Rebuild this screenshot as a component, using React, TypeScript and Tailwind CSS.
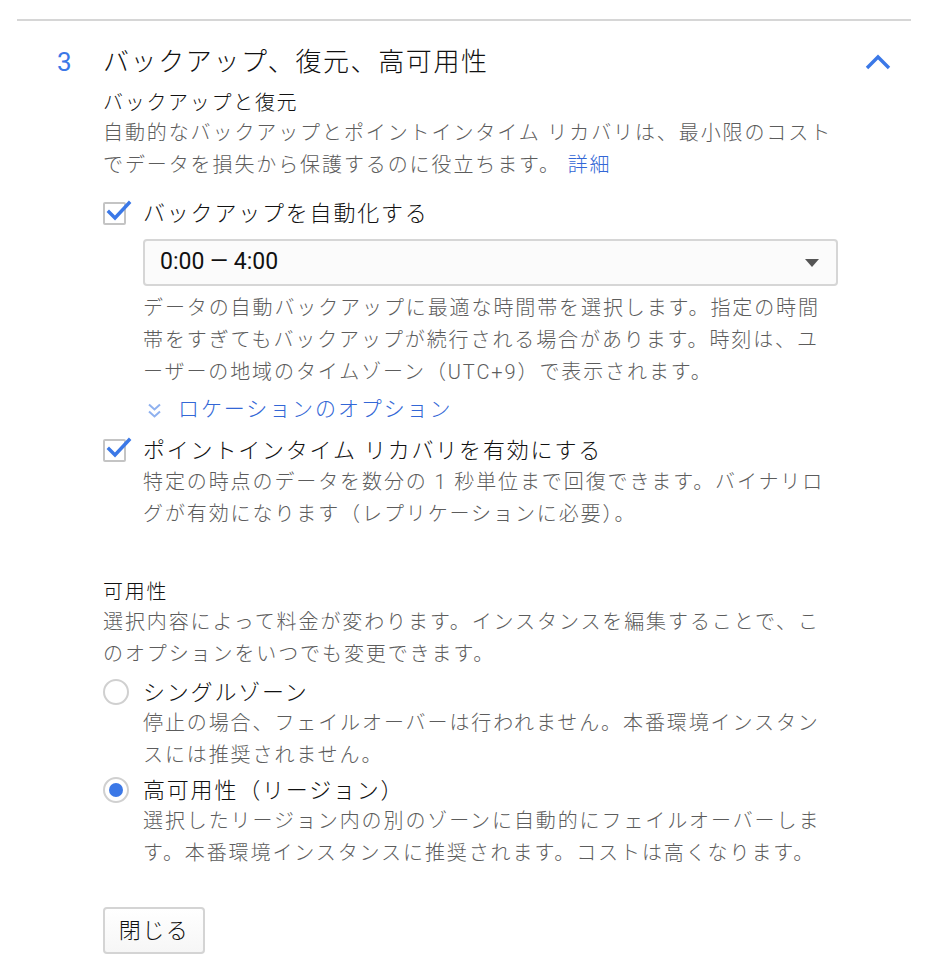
import React from "react";

const jp = { fontFamily: '"Roboto", "Noto Sans CJK JP", sans-serif' };

// Checked checkbox: grey square with a blue tick that spills over the edge
const CheckBox = () => (
  <span className="relative inline-block w-[23px] h-[23px] border-2 border-[#c4c4c4] rounded-[2px] shrink-0">
    <svg
      className="absolute left-[1px] top-[-5px]"
      width="26"
      height="24"
      viewBox="0 0 26 24"
      fill="none"
    >
      <path d="M3 13 L9 19 L23 4" stroke="#3b78e7" strokeWidth="3.4" strokeLinecap="square" />
    </svg>
  </span>
);

const Radio = ({ checked }: { checked?: boolean }) => (
  <span className="inline-flex items-center justify-center w-[26px] h-[26px] rounded-full border-2 border-[#d0d0d0] shrink-0">
    {checked && <span className="block w-[14px] h-[14px] rounded-full bg-[#3b78e7]" />}
  </span>
);

export default function App() {
  return (
    <div className="w-[928px] h-[978px] bg-white text-[#111111] font-light overflow-hidden" style={jp}>
      <div className="ml-[17px] mt-[19px] w-[894px] h-[2px] bg-[#d6d6d6]" />

      {/* Section header */}
      <div className="mt-[23px] h-[36px] flex items-center">
        <span className="w-[103px] pl-[57px] text-[26px] text-[#3b78e7] font-normal">3</span>
        <span className="text-[26px] tracking-[1.6px] leading-[36px]">バックアップ、復元、高可用性</span>
        <svg className="ml-auto mr-[37px]" width="26" height="18" viewBox="0 0 26 18" fill="none">
          <path d="M2 15 L13 4 L24 15" stroke="#3b78e7" strokeWidth="3.4" />
        </svg>
      </div>

      <div className="pl-[103px]">
        {/* Backup and restore */}
        <div className="mt-[9px] text-[20px] leading-[28px] tracking-[1.7px]">バックアップと復元</div>
        <div className="text-[20px] leading-[32px] tracking-[1.9px] text-[#5c5c5c]">
          自動的なバックアップとポイントインタイム リカバリは、最小限のコスト
          <br />
          でデータを損失から保護するのに役立ちます。 <span className="text-[#3367d6]">詳細</span>
        </div>

        <div className="mt-[16px] h-[32px] flex items-center gap-[17px]">
          <CheckBox />
          <span className="text-[22px] tracking-[1.8px]">バックアップを自動化する</span>
        </div>

        <div className="pl-[40px]">
          <div className="mt-[10px] w-[695px] h-[47px] flex items-center pl-[15px] pr-[17px] border-2 border-[#d6d6d6] rounded-[4px] bg-[#fbfbfb]">
            <span className="text-[23px] font-normal">0:00 — 4:00</span>
            <svg className="ml-auto" width="14" height="8" viewBox="0 0 14 8">
              <path d="M0 0 H14 L7 8 Z" fill="#555555" />
            </svg>
          </div>

          <div className="mt-[6px] text-[20px] leading-[32px] tracking-[1.9px] text-[#5c5c5c]">
            データの自動バックアップに最適な時間帯を選択します。指定の時間
            <br />
            帯をすぎてもバックアップが続行される場合があります。時刻は、ユ
            <br />
            ーザーの地域のタイムゾーン（UTC+9）で表示されます。
          </div>

          <div className="mt-[6px] h-[32px] flex items-center gap-[16px] pl-[4px] text-[#3367d6]">
            <svg width="15" height="17" viewBox="0 0 15 17" fill="none">
              <path d="M2 2.5 L7.5 7.5 L13 2.5 M2 9.5 L7.5 14.5 L13 9.5" stroke="#8fb1ef" strokeWidth="2" />
            </svg>
            <span className="text-[21px] tracking-[1.9px]">ロケーションのオプション</span>
          </div>
        </div>

        <div className="mt-[8px] h-[32px] flex items-center gap-[17px]">
          <CheckBox />
          <span className="text-[22px] tracking-[1.8px]">ポイントインタイム リカバリを有効にする</span>
        </div>
        <div className="pl-[40px] text-[20px] leading-[32px] tracking-[1.9px] text-[#5c5c5c]">
          特定の時点のデータを数分の 1 秒単位まで回復できます。バイナリロ
          <br />
          グが有効になります（レプリケーションに必要）。
        </div>

        {/* Availability */}
        <div className="mt-[48px] text-[20px] leading-[28px] tracking-[1.7px]">可用性</div>
        <div className="text-[20px] leading-[32px] tracking-[1.9px] text-[#5c5c5c]">
          選択内容によって料金が変わります。インスタンスを編集することで、こ
          <br />
          のオプションをいつでも変更できます。
        </div>

        <div className="mt-[7px] h-[30px] flex items-center gap-[14px]">
          <Radio />
          <span className="text-[22px] tracking-[1.8px]">シングルゾーン</span>
        </div>
        <div className="pl-[40px] text-[20px] leading-[32px] tracking-[1.9px] text-[#5c5c5c]">
          停止の場合、フェイルオーバーは行われません。本番環境インスタン
          <br />
          スには推奨されません。
        </div>

        <div className="mt-[4px] h-[30px] flex items-center gap-[14px]">
          <Radio checked />
          <span className="text-[22px] tracking-[1.8px]">高可用性（リージョン）</span>
        </div>
        <div className="pl-[40px] text-[20px] leading-[32px] tracking-[1.9px] text-[#5c5c5c]">
          選択したリージョン内の別のゾーンに自動的にフェイルオーバーしま
          <br />
          す。本番環境インスタンスに推奨されます。コストは高くなります。
        </div>

        <button className="mt-[38px] w-[102px] h-[47px] border-2 border-[#d4d4d4] rounded-[4px] bg-gradient-to-b from-white to-[#f6f6f6] text-[22px] tracking-[1.5px]">
          閉じる
        </button>
      </div>
    </div>
  );
}
